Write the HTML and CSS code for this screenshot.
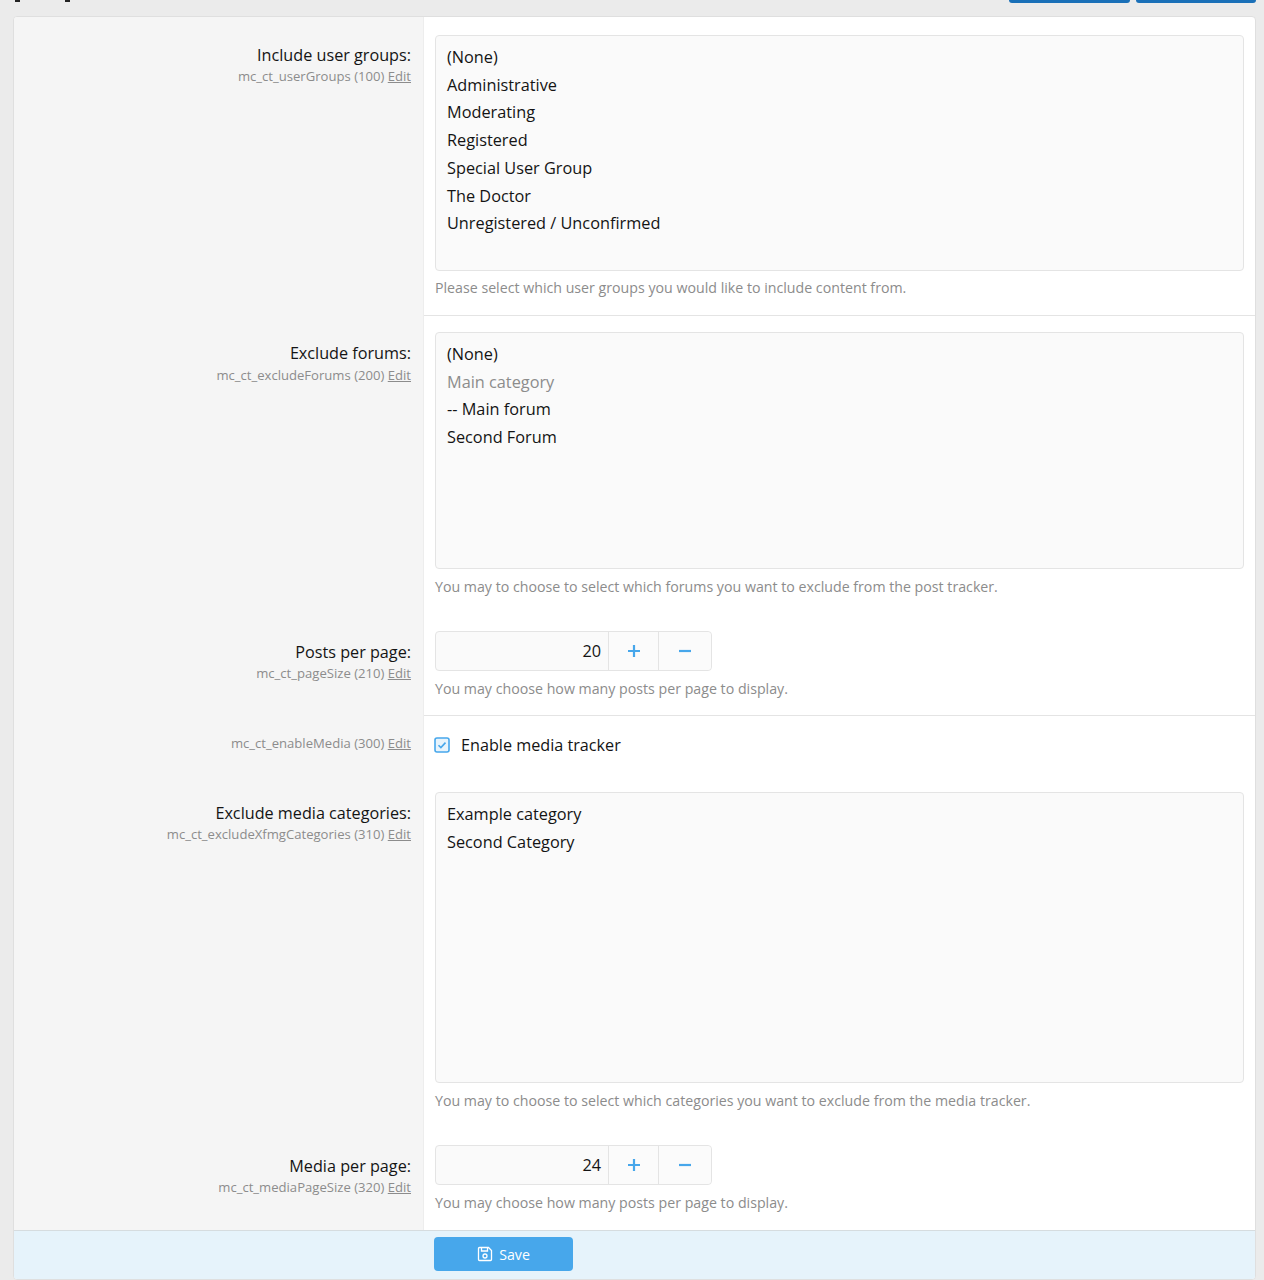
FILE: index.html
```html
<!DOCTYPE html>
<html lang="en">

<head>
  <meta charset="utf-8">
  <title>Options</title>
  <meta name="viewport" content="width=device-width, initial-scale=1">
  <link rel="stylesheet" href="styles.css">
</head>
<body>

  <!-- page header, scrolled almost out of view -->
  <div class="pageHeader">
    <div class="pageTitle"><span class="tick"></span><span class="tick tick2"></span></div>
    <div class="headerButtons">
      <span class="headerButton"></span>
      <span class="headerButton second"></span>
    </div>
  </div>

  <form class="block">

    <div class="formRow rowLine rowFirst">
      <div class="rowLabel">
        <div class="labelText">Include user groups:</div>
        <div class="optionHint">mc_ct_userGroups (100) <a href="#">Edit</a></div>
      </div>
      <div class="rowInput">
        <div class="listBox box0">
          <div>(None)</div>
          <div>Administrative</div>
          <div>Moderating</div>
          <div>Registered</div>
          <div>Special User Group</div>
          <div>The Doctor</div>
          <div>Unregistered / Unconfirmed</div>
        </div>
        <div class="explain">Please select which user groups you would like to include content from.</div>
      </div>
    </div>

    <div class="formRow rowSecond">
      <div class="rowLabel">
        <div class="labelText">Exclude forums:</div>
        <div class="optionHint">mc_ct_excludeForums (200) <a href="#">Edit</a></div>
      </div>
      <div class="rowInput">
        <div class="listBox box1">
          <div>(None)</div>
          <div class="muted">Main category</div>
          <div>-- Main forum</div>
          <div>Second Forum</div>
        </div>
        <div class="explain">You may to choose to select which forums you want to exclude from the post tracker.</div>
      </div>
    </div>

    <div class="formRow rowLine rowThird">
      <div class="rowLabel">
        <div class="labelText">Posts per page:</div>
        <div class="optionHint">mc_ct_pageSize (210) <a href="#">Edit</a></div>
      </div>
      <div class="rowInput">
        <div class="numberBox">
          <div class="numberValue">20</div>
          <div class="numberBtn"><svg width="14" height="14" viewBox="0 0 14 14"><path d="M7 1v12M1 7h12"/></svg></div>
          <div class="numberBtn"><svg width="14" height="14" viewBox="0 0 14 14"><path d="M1 7h12"/></svg></div>
        </div>
        <div class="explain">You may choose how many posts per page to display.</div>
      </div>
    </div>

    <div class="formRow">
      <div class="rowLabel checkLabel">
        <div class="optionHint">mc_ct_enableMedia (300) <a href="#">Edit</a></div>
      </div>
      <div class="rowInput checkRow">
        <svg class="checkIcon" width="16" height="16" viewBox="0 0 16 16">
          <rect x="1" y="1" width="14" height="14" rx="2"/>
          <path d="M4.5 8.2l2.4 2.4 4.6-5"/>
        </svg>
        <span>Enable media tracker</span>
      </div>
    </div>

    <div class="formRow">
      <div class="rowLabel">
        <div class="labelText">Exclude media categories:</div>
        <div class="optionHint">mc_ct_excludeXfmgCategories (310) <a href="#">Edit</a></div>
      </div>
      <div class="rowInput">
        <div class="listBox box2">
          <div>Example category</div>
          <div>Second Category</div>
        </div>
        <div class="explain">You may to choose to select which categories you want to exclude from the media tracker.</div>
      </div>
    </div>

    <div class="formRow">
      <div class="rowLabel">
        <div class="labelText">Media per page:</div>
        <div class="optionHint">mc_ct_mediaPageSize (320) <a href="#">Edit</a></div>
      </div>
      <div class="rowInput">
        <div class="numberBox">
          <div class="numberValue">24</div>
          <div class="numberBtn"><svg width="14" height="14" viewBox="0 0 14 14"><path d="M7 1v12M1 7h12"/></svg></div>
          <div class="numberBtn"><svg width="14" height="14" viewBox="0 0 14 14"><path d="M1 7h12"/></svg></div>
        </div>
        <div class="explain">You may choose how many posts per page to display.</div>
      </div>
    </div>

    <div class="submitRow">
      <div class="submitSpacer"></div>
      <div class="submitCell">
        <button type="button" class="saveButton">
          <svg width="16" height="16" viewBox="0 0 16 16" fill="none" stroke="#fff" stroke-width="1.3">
            <path d="M1.5 2.5a1 1 0 0 1 1-1h9l3 3v9a1 1 0 0 1-1 1h-11a1 1 0 0 1-1-1z"/>
            <path d="M4.5 1.5v3.5h6v-3.5"/>
            <circle cx="8" cy="10" r="2"/>
          </svg>
          Save
        </button>
      </div>
    </div>

  </form>

</body>
</html>
```

FILE: styles.css
```css
html, body {
  height: 1280px;
  overflow: hidden;
}
body {
  margin: 0;
  padding: 0 8px 0 13px;
  background: #ebebeb;
  font-family: "Open Sans", "Noto Sans", sans-serif;
  font-size: 16.2px;
  color: #141414;
}
.pageHeader {
  display: flex;
  justify-content: space-between;
  height: 3px;
  margin-bottom: 13px;
  overflow: hidden;
}
.pageTitle {
  display: flex;
}
.tick {
  width: 5px;
  height: 2px;
  margin-left: 2px;
  background: #222;
}
.tick2 {
  margin-left: 45px;
}
.headerButtons {
  display: flex;
  gap: 6px;
}
.headerButton {
  width: 121px;
  height: 3px;
  background: #1a70b8;
  border-radius: 0 0 4px 4px;
}
.headerButton.second {
  width: 120px;
}

.block {
  display: flex;
  flex-direction: column;
  width: 1243px;
  box-sizing: border-box;
  background: #fff;
  border: 1px solid #dfdfdf;
  border-radius: 4px;
  overflow: hidden;
}
.formRow {
  display: flex;
}
.rowLabel {
  flex: 0 0 410px;
  padding: 27px 12px 0 0;
  box-sizing: border-box;
  background: #f5f5f5;
  border-right: 1px solid #ededed;
  text-align: right;
}
.labelText {
  line-height: 22px;
}
.optionHint {
  font-size: 13.1px;
  line-height: 20px;
  color: #8c8c8c;
}
.optionHint a {
  color: #8c8c8c;
}
.rowInput {
  flex: 1;
  padding: 17px 11px 17px 11px;
  min-width: 0;
}
.rowLine .rowInput {
  border-bottom: 1px solid #e4e4e4;
}
.rowFirst .rowInput {
  padding-top: 18px;
}
.rowSecond .rowInput {
  padding-top: 16px;
}
.rowSecond .rowLabel {
  padding-top: 25px;
}
.rowSecond .labelText {
  line-height: 24px;
}
.rowThird .rowInput {
  padding-bottom: 16px;
}
.listBox {
  padding: 8px 11px;
  background: #fafafa;
  border: 1px solid #e4e4e4;
  border-radius: 4px;
  font-size: 16.3px;
  line-height: 27.7px;
}
.box0 {
  height: 218px;
  margin-bottom: -1px;
}
.box1 {
  height: 219px;
}
.box2 {
  height: 273px;
}
.muted {
  color: #8c8c8c;
}
.explain {
  margin-top: 8px;
  font-size: 14.2px;
  line-height: 20px;
  color: #8c8c8c;
}
.numberBox {
  display: flex;
  width: 277px;
  height: 40px;
  box-sizing: border-box;
  background: #fafafa;
  border: 1px solid #e4e4e4;
  border-radius: 4px;
}
.numberValue {
  flex: 1;
  padding-right: 7px;
  font-size: 16.3px;
  line-height: 38px;
  text-align: right;
}
.numberBtn {
  display: flex;
  align-items: center;
  justify-content: center;
  width: 50px;
  box-sizing: border-box;
  border-left: 1px solid #e4e4e4;
  background: #fbfbfb;
}
.numberBtn svg {
  fill: none;
  stroke: #47a7eb;
  stroke-width: 2.2;
}
.numberBtn + .numberBtn {
  width: 53px;
  border-radius: 0 4px 4px 0;
}
.checkLabel {
  padding-top: 17px;
}
.checkRow {
  display: flex;
  align-items: flex-start;
  gap: 11px;
  height: 59px;
  box-sizing: border-box;
  padding-bottom: 0;
  line-height: 24px;
}
.checkIcon {
  margin: 4px 0 0 -1px;
  fill: #e8f4fc;
  stroke: #47a7eb;
  stroke-width: 1.6;
}
.checkIcon path {
  fill: none;
}
.submitRow {
  display: flex;
  height: 49px;
  box-sizing: border-box;
  background: #e6f3fb;
  border-top: 1px solid #d6dcdf;
}
.submitSpacer {
  flex: 0 0 420px;
}
.submitCell {
  padding-top: 6px;
}
.saveButton {
  display: flex;
  align-items: center;
  justify-content: center;
  gap: 6px;
  width: 139px;
  height: 34px;
  padding: 0;
  background: #47a7eb;
  border: 0;
  border-radius: 4px;
  color: #fff;
  font-family: inherit;
  font-size: 14.2px;
}
```
